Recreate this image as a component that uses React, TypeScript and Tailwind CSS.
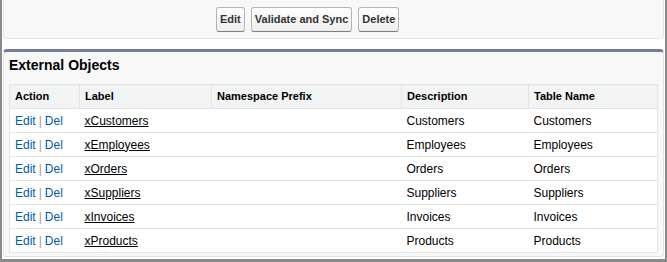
const rows = [
  { label: "xCustomers", desc: "Customers", table: "Customers" },
  { label: "xEmployees", desc: "Employees", table: "Employees" },
  { label: "xOrders", desc: "Orders", table: "Orders" },
  { label: "xSuppliers", desc: "Suppliers", table: "Suppliers" },
  { label: "xInvoices", desc: "Invoices", table: "Invoices" },
  { label: "xProducts", desc: "Products", table: "Products" },
];

function Btn({ children }: { children: React.ReactNode }) {
  return (
    <button className="h-[25px] px-[3px] rounded-[3px] border border-[#b5b5b5] border-b-[#7f7f7f] bg-gradient-to-b from-white to-[#ededed] text-[11px] font-bold text-[#333] leading-none">
      {children}
    </button>
  );
}

export default function App() {
  return (
    <div
      className="w-[667px] h-[262px] border-x-2 border-b-[3px] border-[#8a8a8a] px-px bg-white overflow-hidden"
      style={{ fontFamily: '"Liberation Sans", Arial, sans-serif' }}
    >
      <div className="h-[39px] bg-[#f8f8f8] border border-t-0 border-[#e4e4e4] rounded-b-[4px] flex items-center gap-[6px] pl-[212px] pt-px">
        <Btn>Edit</Btn>
        <Btn>Validate and Sync</Btn>
        <Btn>Delete</Btn>
      </div>

      <div className="mt-[10px] bg-[#f8f8f8] border border-t-[3px] border-[#e0e3e5] border-t-[#747e96] rounded-[4px] px-[5px] pb-[3px]">
        <h2 className="h-[32px] pt-[5px] text-[14px] leading-[16px] font-bold text-black">
          External Objects
        </h2>
        <table className="w-[648px] table-fixed border-collapse bg-white text-[12px] text-black">
          <colgroup>
            <col className="w-[70px]" />
            <col className="w-[132px]" />
            <col className="w-[190px]" />
            <col className="w-[127px]" />
            <col className="w-[129px]" />
          </colgroup>
          <thead>
            <tr className="h-[24px] bg-[#f2f3f3] text-[11px] font-bold text-left">
              {["Action", "Label", "Namespace Prefix", "Description", "Table Name"].map((h) => (
                <th key={h} className="border border-[#e0e3e5] px-[5px] font-bold">
                  {h}
                </th>
              ))}
            </tr>
          </thead>
          <tbody>
            {rows.map((r) => (
              <tr key={r.label} className="h-[24px] border border-[#e3e3e3]">
                <td className="pl-[5px] whitespace-nowrap">
                  <a className="text-[#015ba7]">Edit</a>
                  <span className="text-[#999] px-[3px]">|</span>
                  <a className="text-[#015ba7]">Del</a>
                </td>
                <td className="px-[5px]">
                  <a className="underline">{r.label}</a>
                </td>
                <td className="px-[5px]"></td>
                <td className="px-[5px]">{r.desc}</td>
                <td className="px-[5px]">{r.table}</td>
              </tr>
            ))}
          </tbody>
        </table>
      </div>
    </div>
  );
}
